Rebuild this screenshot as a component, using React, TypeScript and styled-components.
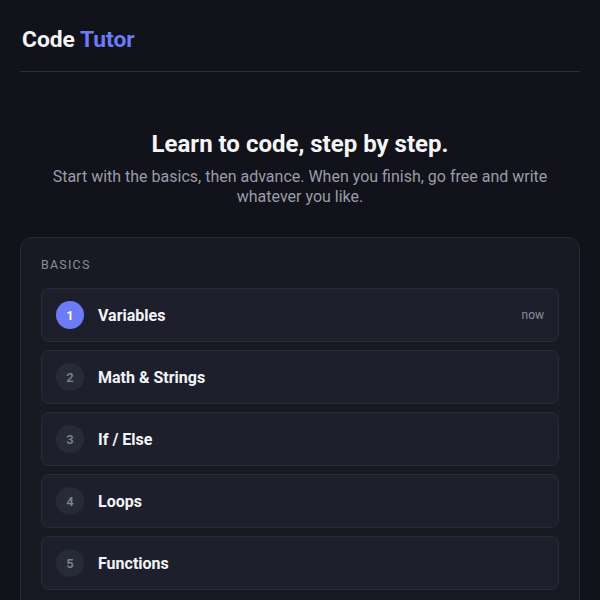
import React from "react";
import styled, { createGlobalStyle } from "styled-components";

const Global = createGlobalStyle`
  html, body { margin: 0; padding: 0; background: #12121a; }
  body { font-family: Roboto, "Noto Sans", sans-serif; color: #f3f4f6; }
  * { box-sizing: border-box; }
`;

const Page = styled.div`
  padding: 0 20px;
  min-height: 600px;
  background: #12121a;
`;

const Header = styled.header`
  padding: 27px 2px 18px;
  border-bottom: 1px solid #2a2d38;
`;

const Brand = styled.h1`
  margin: 0;
  font-size: 22.8px;
  font-weight: 700;
  line-height: 26px;
  color: #f5f5f7;
`;

const Accent = styled.span`
  color: #6b7cf6;
`;

const Hero = styled.section`
  text-align: center;
  padding: 57px 0 30px;
`;

const Title = styled.h2`
  margin: 0 0 8px;
  font-size: 24px;
  font-weight: 700;
  line-height: 30px;
  color: #f5f5f7;
`;

const Subtitle = styled.p`
  margin: 0;
  font-size: 16px;
  line-height: 20px;
  color: #9a9ca8;
  padding: 0 30px;
`;

const Card = styled.section`
  background: #171a23;
  border: 1px solid #262a35;
  border-radius: 12px;
  padding: 19px 20px 20px;
`;

const SectionLabel = styled.div`
  font-size: 12.5px;
  letter-spacing: 1.2px;
  color: #8b8e9a;
  text-transform: uppercase;
  line-height: 16px;
  margin-bottom: 15px;
`;

const List = styled.div`
  display: flex;
  flex-direction: column;
  gap: 8px;
`;

const Row = styled.div`
  display: flex;
  align-items: center;
  height: 54px;
  padding: 0 14px;
  background: #1d202c;
  border: 1px solid #282c39;
  border-radius: 8px;
`;

const Num = styled.div<{ $active?: boolean }>`
  width: 28px;
  height: 28px;
  border-radius: 50%;
  display: flex;
  align-items: center;
  justify-content: center;
  font-size: 13px;
  font-weight: 600;
  background: ${(p) => (p.$active ? "#6b7cf6" : "#272b38")};
  color: ${(p) => (p.$active ? "#ffffff" : "#7d8190")};
  margin-right: 14px;
  flex-shrink: 0;
`;

const Name = styled.div`
  font-size: 16px;
  font-weight: 700;
  color: #f3f4f6;
  flex: 1;
`;

const Tag = styled.span`
  font-size: 12px;
  color: #8b8e9a;
`;

const lessons = ["Variables", "Math & Strings", "If / Else", "Loops", "Functions"];

export default function App() {
  return (
    <>
      <Global />
      <Page>
        <Header>
          <Brand>
            Code <Accent>Tutor</Accent>
          </Brand>
        </Header>
        <Hero>
          <Title>Learn to code, step by step.</Title>
          <Subtitle>
            Start with the basics, then advance. When you finish, go free and write whatever you like.
          </Subtitle>
        </Hero>
        <Card>
          <SectionLabel>Basics</SectionLabel>
          <List>
            {lessons.map((l, i) => (
              <Row key={l}>
                <Num $active={i === 0}>{i + 1}</Num>
                <Name>{l}</Name>
                {i === 0 && <Tag>now</Tag>}
              </Row>
            ))}
          </List>
        </Card>
      </Page>
    </>
  );
}
